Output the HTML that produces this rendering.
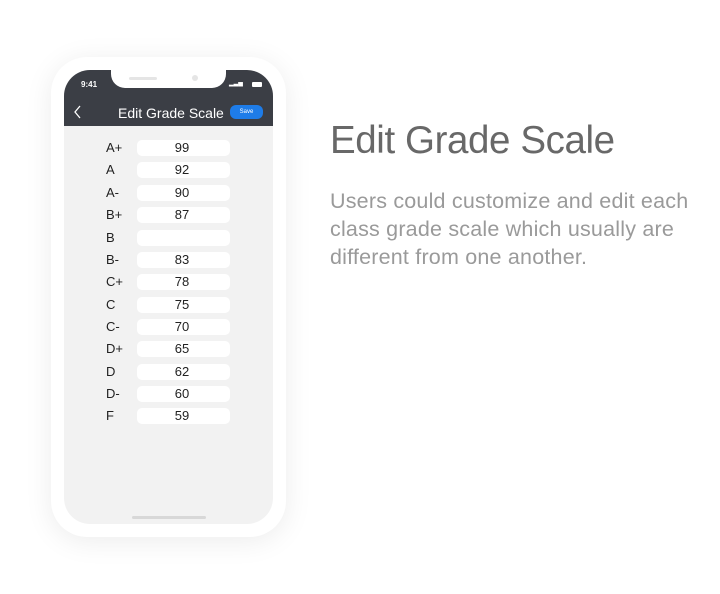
<!DOCTYPE html>
<html><head><style>
*{margin:0;padding:0;box-sizing:border-box}
body{width:720px;height:594px;background:#fff;position:relative;overflow:hidden;font-family:"Liberation Sans",sans-serif}
.phone{position:absolute;left:51px;top:57px;width:235px;height:480px;background:#fff;border-radius:36px;box-shadow:0 4px 28px rgba(0,0,0,0.08)}
.screen{position:absolute;left:64px;top:70px;width:209px;height:454px;background:#f2f2f2;border-radius:26px;overflow:hidden}
.hdr{position:absolute;left:0;top:0;width:209px;height:56px;background:#3b3e45}
.notch{position:absolute;left:47px;top:0;width:115px;height:18px;background:#fff;border-radius:0 0 14px 14px}
.row{position:absolute;left:0;width:209px;height:16px}
.row .l{position:absolute;left:42px;top:0;font-size:13px;line-height:16px;color:#222}
.row .v{position:absolute;left:73px;top:0;width:93px;height:16px;background:#fff;border-radius:5px;text-align:center;font-size:13px;line-height:16px;color:#222;padding-right:3px}
h1{position:absolute;left:330px;top:119px;font-size:38.5px;font-weight:normal;color:#686868;letter-spacing:-0.4px}
p{position:absolute;left:330px;top:187px;font-size:21.5px;line-height:28px;color:#9a9a9a;width:390px;letter-spacing:0.2px}
</style></head><body>
<div class="phone"></div>
<div class="screen">
<div class="hdr">
<div class="notch"></div>
<div style="position:absolute;left:65px;top:7px;width:28px;height:3px;background:#e5e5e5;border-radius:2px"></div>
<div style="position:absolute;left:128px;top:5px;width:6px;height:6px;background:#e5e5e5;border-radius:50%"></div>
<div style="position:absolute;left:17px;top:10px;font-size:8px;color:#fff;font-weight:bold">9:41</div>
<div style="position:absolute;left:188px;top:12px;width:10px;height:5px;background:#fff;border-radius:1px"></div>
<div style="position:absolute;left:165px;top:12px;width:16px;height:5px;color:#fff;font-size:6px;line-height:5px">▂▃▅</div>
<svg style="position:absolute;left:9px;top:35px" width="9" height="14"><path d="M7 1L2 7L7 13" stroke="#fff" stroke-width="1.3" fill="none"/></svg>
<div style="position:absolute;left:54px;top:35px;font-size:14px;color:#fff">Edit Grade Scale</div>
<div style="position:absolute;left:166px;top:35px;width:33px;height:14px;background:#1e7ce8;border-radius:6px;color:#fff;font-size:6px;line-height:14px;text-align:center">Save</div>
</div>
</div>
<div style="position:absolute;left:64px;top:70px;width:209px;height:454px">
<div class="row" style="top:70px"><span class="l">A+</span><span class="v">99</span></div>
<div class="row" style="top:92px"><span class="l">A</span><span class="v">92</span></div>
<div class="row" style="top:115px"><span class="l">A-</span><span class="v">90</span></div>
<div class="row" style="top:137px"><span class="l">B+</span><span class="v">87</span></div>
<div class="row" style="top:160px"><span class="l">B</span><span class="v"></span></div>
<div class="row" style="top:182px"><span class="l">B-</span><span class="v">83</span></div>
<div class="row" style="top:204px"><span class="l">C+</span><span class="v">78</span></div>
<div class="row" style="top:227px"><span class="l">C</span><span class="v">75</span></div>
<div class="row" style="top:249px"><span class="l">C-</span><span class="v">70</span></div>
<div class="row" style="top:271px"><span class="l">D+</span><span class="v">65</span></div>
<div class="row" style="top:294px"><span class="l">D</span><span class="v">62</span></div>
<div class="row" style="top:316px"><span class="l">D-</span><span class="v">60</span></div>
<div class="row" style="top:338px"><span class="l">F</span><span class="v">59</span></div>
<div style="position:absolute;left:68px;top:446px;width:74px;height:3px;background:#d8d8d8;border-radius:2px"></div>
</div>
<h1>Edit Grade Scale</h1>
<p>Users could customize and edit each class grade scale which usually are different from one another.</p>
</body></html>
